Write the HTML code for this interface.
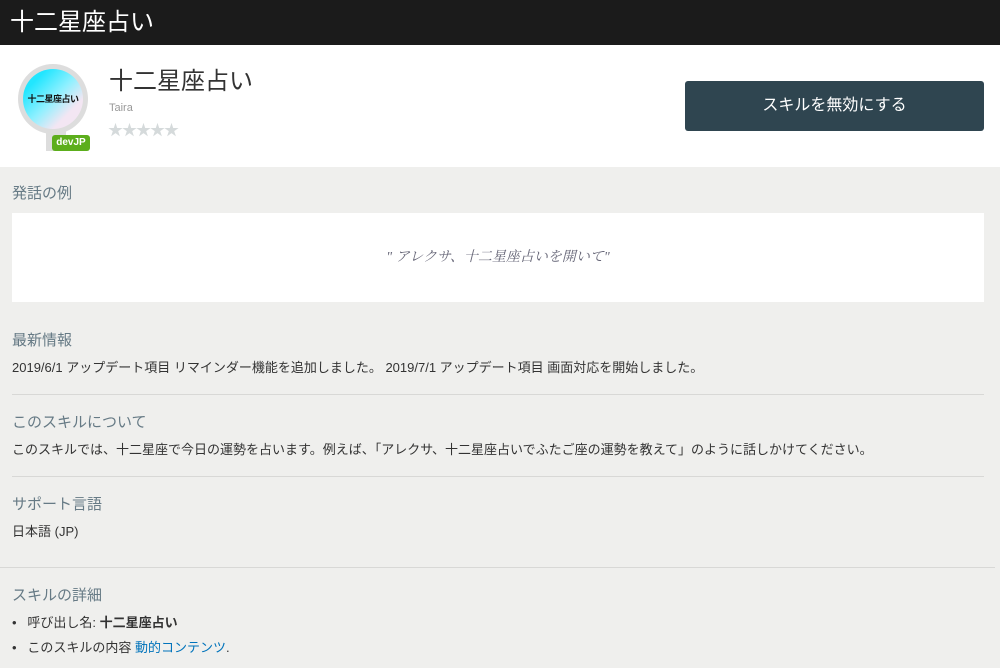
<!DOCTYPE html>
<html><head><meta charset="utf-8"><style>
*{margin:0;padding:0;box-sizing:border-box}
body{width:1000px;height:668px;overflow:hidden;background:#efefed;font-family:"Liberation Sans","Noto Sans CJK JP",sans-serif;color:#333}
.hd{height:45px;background:#1b1b1b;color:#fff;font-size:24px;line-height:46px;padding-left:10px}
.top{height:122px;background:#fff;position:relative}
.abs{position:absolute}
.h{position:absolute;left:12px;font-size:15px;color:#667a85}
.t{position:absolute;left:12px;font-size:13px;color:#333}
.hr{position:absolute;height:1px;background:#d8d8d6}
</style></head><body>
<div class="hd">十二星座占い</div>
<div class="top">
 <div class="abs" style="left:18px;top:19px;width:70px;height:70px;border-radius:50%;background:#ddd;"></div>
 <div class="abs" style="left:46px;top:70px;width:20px;height:36px;background:#ddd;"></div>
 <div class="abs" style="left:23px;top:24px;width:60px;height:60px;border-radius:50%;background:linear-gradient(135deg,#22e6ff 20%,#8ff0ff 50%,#f3e6f3 75%);font-size:9px;font-weight:bold;color:#111;text-align:center;line-height:60px;letter-spacing:-0.5px">十二星座占い</div>
 <div class="abs" style="left:52px;top:90px;width:38px;height:16px;background:#5cae1c;border-radius:3px;color:#fff;font-size:10px;font-weight:bold;text-align:center;line-height:16px">devJP</div>
 <div class="abs" style="left:109px;top:16px;font-size:24px;color:#333">十二星座占い</div>
 <div class="abs" style="left:109px;top:57px;font-size:11px;color:#999">Taira</div>
 <div class="abs" style="left:108px;top:74px;font-size:15px;color:#d5dadb;letter-spacing:-1px">★★★★★</div>
 <div class="abs" style="left:685px;top:36px;width:299px;height:50px;background:#2f4550;border-radius:3px;color:#fff;font-size:16px;text-align:center;line-height:50px">スキルを無効にする</div>
</div>
<div class="h" style="top:182px">発話の例</div>
<div class="abs" style="left:12px;top:213px;width:972px;height:89px;background:#fff;text-align:center;line-height:89px;font-family:'Liberation Serif','Noto Serif CJK SC',serif;font-style:italic;font-size:14px;color:#667">" アレクサ、十二星座占いを開いて"</div>
<div class="h" style="top:329px">最新情報</div>
<div class="t" style="top:357px">2019/6/1 アップデート項目 リマインダー機能を追加しました。 2019/7/1 アップデート項目 画面対応を開始しました。</div>
<div class="hr" style="left:12px;top:394px;width:972px"></div>
<div class="h" style="top:411px">このスキルについて</div>
<div class="t" style="top:439px">このスキルでは、十二星座で今日の運勢を占います。例えば、「アレクサ、十二星座占いでふたご座の運勢を教えて」のように話しかけてください。</div>
<div class="hr" style="left:12px;top:476px;width:972px"></div>
<div class="h" style="top:493px">サポート言語</div>
<div class="t" style="top:521px">日本語 (JP)</div>
<div class="hr" style="left:0;top:567px;width:995px"></div>
<div class="h" style="top:584px">スキルの詳細</div>
<div class="t" style="top:612px">•&nbsp;&nbsp; 呼び出し名: <b>十二星座占い</b></div>
<div class="t" style="top:637px">•&nbsp;&nbsp; このスキルの内容 <span style="color:#0073bb">動的コンテンツ</span>.</div>
</body></html>
